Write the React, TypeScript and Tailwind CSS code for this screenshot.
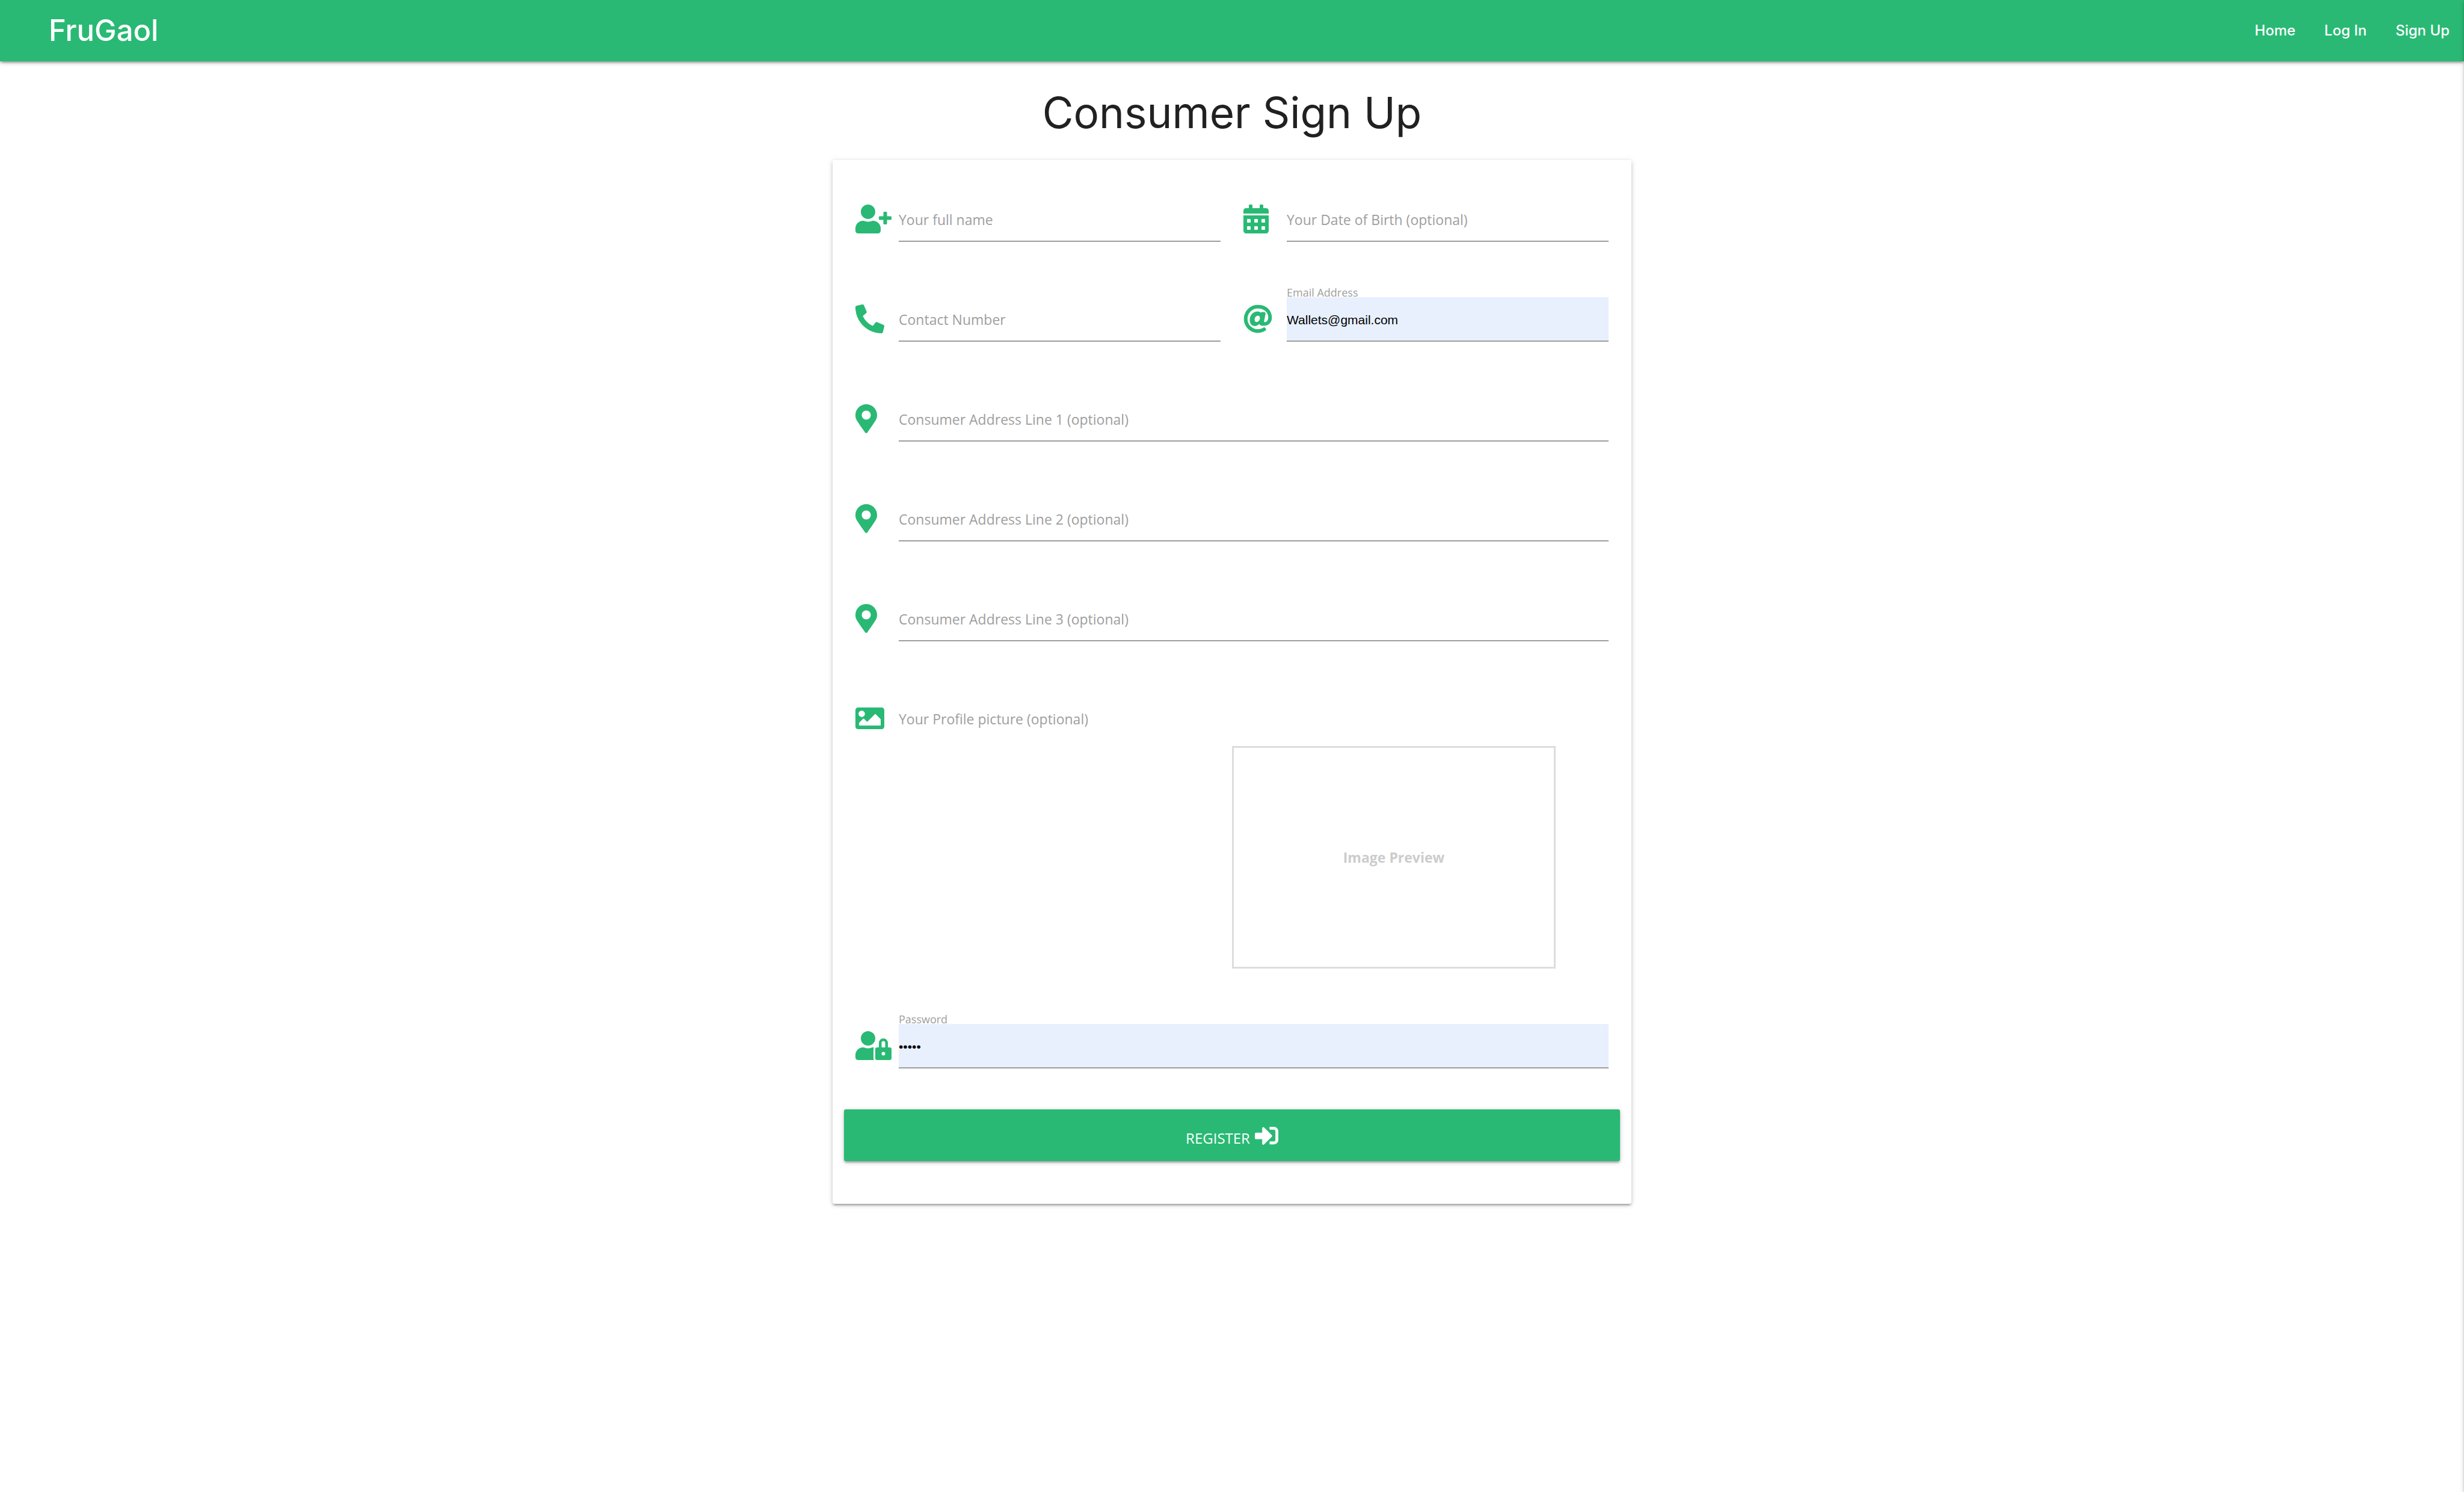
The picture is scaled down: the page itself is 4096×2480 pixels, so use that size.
import { useState, type ReactNode } from "react";
import {
  FaAt,
  FaCalendarAlt,
  FaImage,
  FaMapMarkerAlt,
  FaPhoneAlt,
  FaSignInAlt,
  FaUserLock,
  FaUserPlus,
} from "react-icons/fa";

const RAISED =
  "shadow-[0_3px_3px_0_rgba(0,0,0,0.14),0_5px_2px_-3px_rgba(0,0,0,0.12),0_2px_8px_0_rgba(0,0,0,0.2)]";

const NAV_LINKS = ["Home", "Log In", "Sign Up"];

function FieldIcon({ children }: { children: ReactNode }) {
  return (
    <span className="flex h-[72px] w-[72px] shrink-0 items-center text-[#29b974]">{children}</span>
  );
}

type FieldProps = {
  id: string;
  label: string;
  icon: ReactNode;
  type?: string;
  initial?: string;
};

function Field({ id, label, icon, type = "text", initial = "" }: FieldProps) {
  const [value, setValue] = useState(initial);
  const filled = value !== "";
  return (
    <div className="flex px-[19px]">
      <FieldIcon>{icon}</FieldIcon>
      <div className="relative min-w-0 flex-1">
        <input
          id={id}
          type={type}
          value={value}
          onChange={(e) => setValue(e.target.value)}
          className={
            "block h-[74px] w-full border-b-2 border-[#9e9e9e] pt-1 font-['Liberation_Sans',sans-serif] text-[21px] text-black outline-none " +
            (filled ? "bg-[#e8f0fe]" : "bg-transparent")
          }
        />
        <label
          htmlFor={id}
          className={
            "pointer-events-none absolute left-0 whitespace-nowrap text-[#9e9e9e] " +
            (filled ? "-top-5 text-[18px] leading-6" : "top-0 text-[23px] leading-[74px]")
          }
        >
          {label}
        </label>
      </div>
    </div>
  );
}

function NavBar() {
  return (
    <nav
      className={
        "flex h-[102px] items-center justify-between bg-[#29b974] font-[Inter,sans-serif] font-medium text-white " +
        RAISED
      }
    >
      <a href="#" className="pl-[81px] text-[49px] leading-[98px]">
        FruGaol
      </a>
      <ul className="flex">
        {NAV_LINKS.map((name) => (
          <li key={name}>
            <a href="#" className="block px-6 text-[24px] leading-[102px]">
              {name}
            </a>
          </li>
        ))}
      </ul>
    </nav>
  );
}

export default function App() {
  return (
    <div className="min-h-screen overflow-x-hidden bg-white font-['Open_Sans',sans-serif]">
      <NavBar />
      <aside
        aria-hidden="true"
        className={"fixed left-full top-0 h-full w-[480px] bg-white " + RAISED}
      />
      <main>
        <h1 className="mt-[47px] mb-[41px] text-center font-[Inter,sans-serif] text-[71px] leading-[76px] text-[#212121]">
          Consumer Sign Up
        </h1>
        <form
          className={"mx-auto w-full max-w-[1328px] rounded-[3px] bg-white px-[19px] pt-[62px] pb-[71px] " + RAISED}
          onSubmit={(e) => e.preventDefault()}
        >
          <div className="flex flex-col gap-[92px]">
            <div className="grid grid-cols-2">
              <Field id="name" label="Your full name" icon={<FaUserPlus className="h-12 w-[60px]" />} />
              <Field
                id="dob"
                label="Your Date of Birth (optional)"
                icon={<FaCalendarAlt className="h-12 w-[42px]" />}
              />
            </div>
            <div className="grid grid-cols-2">
              <Field id="phone" label="Contact Number" icon={<FaPhoneAlt className="size-12" />} />
              <Field
                id="email"
                label="Email Address"
                type="email"
                initial="Wallets@gmail.com"
                icon={<FaAt className="size-12" />}
              />
            </div>
            {[1, 2, 3].map((line) => (
              <Field
                key={line}
                id={`address${line}`}
                label={`Consumer Address Line ${line} (optional)`}
                icon={<FaMapMarkerAlt className="h-12 w-9" />}
              />
            ))}
            <div>
              <div className="flex px-[19px]">
                <FieldIcon>
                  <FaImage className="size-12" />
                </FieldIcon>
                <label htmlFor="picture" className="cursor-pointer text-[23px] leading-[74px] text-[#9e9e9e]">
                  Your Profile picture (optional)
                </label>
                <input id="picture" type="file" accept="image/*" className="sr-only" />
              </div>
              <div className="mt-2 grid grid-cols-2">
                <div className="col-start-2 mr-[107px] flex h-[370px] items-center justify-center border-[3px] border-[#dddddd] text-[23px] font-bold text-[#cccccc]">
                  Image Preview
                </div>
              </div>
            </div>
            <Field
              id="password"
              label="Password"
              type="password"
              initial="admin"
              icon={<FaUserLock className="h-12 w-[60px]" />}
            />
          </div>
          <button
            type="submit"
            className={
              "mt-[68px] flex h-[86px] w-full items-center justify-center gap-2 rounded-[3px] bg-[#29b974] text-[24px] text-white uppercase " +
              RAISED
            }
          >
            <span className="pt-2.5">Register</span>
            <FaSignInAlt className="size-[39px]" />
          </button>
        </form>
      </main>
    </div>
  );
}
